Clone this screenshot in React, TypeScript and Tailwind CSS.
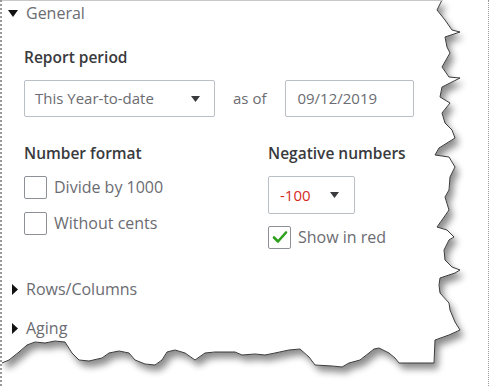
import React from 'react';

const rightEdge: [number, number][] = [
    [440, 0], [435, 10], [443, 20], [450, 30], [458, 32], [443, 37], [445, 47], [448, 53], [440, 67],
    [447, 77], [458, 78], [440, 87], [438, 97], [448, 103], [440, 113], [443, 123], [450, 130],
    [453, 138], [437, 148], [433, 155], [447, 157], [453, 167], [448, 177], [447, 190], [443, 197],
    [447, 210], [440, 220], [435, 227], [445, 230], [452, 237], [447, 240], [442, 250], [443, 260],
    [450, 267], [458, 270], [453, 273], [438, 278], [437, 285], [438, 293], [447, 303], [448, 310],
    [453, 322], [458, 330], [447, 335], [433, 340], [432, 363],
];

const bottomEdge: [number, number][] = [
    [397, 363], [393, 358], [387, 353], [377, 348], [372, 349], [367, 353], [358, 360], [347, 363],
    [340, 367], [330, 366], [313, 365], [307, 357], [298, 349], [287, 350], [273, 353], [263, 355],
    [253, 354], [240, 355], [233, 352], [213, 352], [203, 353], [193, 360], [183, 353], [173, 350],
    [165, 352], [160, 360], [153, 365], [143, 364], [133, 360], [127, 353], [117, 351], [107, 353],
    [100, 358], [87, 361], [77, 360], [70, 353], [63, 342], [53, 341], [43, 343], [33, 342],
    [25, 345], [17, 352], [7, 360], [0, 363],
];

const toPts = (pts: [number, number][]) => pts.map(([x, y]) => `${x},${y}`).join(' ');

function TornEdge() {
    const edge = [...rightEdge, ...bottomEdge];
    return (
        <svg className="absolute inset-0" width="487" height="386">
            <defs>
                <filter id="tear" x="-10%" y="-10%" width="130%" height="130%">
                    <feGaussianBlur in="SourceAlpha" stdDeviation="3.5"/>
                    <feOffset dx="4" dy="6"/>
                    <feComponentTransfer>
                        <feFuncA type="linear" slope="0.45"/>
                    </feComponentTransfer>
                    <feMerge>
                        <feMergeNode/>
                        <feMergeNode in="SourceGraphic"/>
                    </feMerge>
                </filter>
            </defs>
            <polygon points={`0,0 ${toPts(edge)}`} fill="#fff" filter="url(#tear)"/>
            <polyline points={toPts(edge)} fill="none" stroke="#3a3a3a" strokeWidth="1"/>
            <line x1="0" y1="0.5" x2="440" y2="0.5" stroke="#c8c8c8" strokeWidth="1"/>
        </svg>
    );
}

function Caret() {
    return (
        <svg width="9" height="6" viewBox="0 0 9 6">
            <path d="M0 0 H9 L4.5 6 Z" fill="#393a3d"/>
        </svg>
    );
}

function Checkbox({checked, label}: { checked?: boolean; label: string }) {
    return (
        <div className="flex items-center gap-[7px]">
            <div className="w-[23px] h-[23px] border border-[#8d9096] rounded-[2px] bg-white flex items-center justify-center">
                {checked && (
                    <svg width="16" height="14" viewBox="0 0 16 14">
                        <path d="M2 7.5 L6 11.5 L14 2.5" fill="none" stroke="#2ca01c" strokeWidth="2.6"
                              strokeLinecap="round" strokeLinejoin="round"/>
                    </svg>
                )}
            </div>
            <span className="text-[16px] text-[#6b6c72]">{label}</span>
        </div>
    );
}

function Section({open, title}: { open?: boolean; title: string }) {
    return (
        <div className="flex items-center h-[22px]">
            <div className="w-[24px] flex justify-end pr-[8px]">
                {open ? (
                    <svg width="10" height="7" viewBox="0 0 10 7">
                        <path d="M0 0 H10 L5 7 Z" fill="#111"/>
                    </svg>
                ) : (
                    <svg width="6" height="11" viewBox="0 0 6 11">
                        <path d="M0 0 L6 5.5 L0 11 Z" fill="#111"/>
                    </svg>
                )}
            </div>
            <span className="text-[16px] text-[#6b6c72]">{title}</span>
        </div>
    );
}

export default function App() {
    return (
        <div className="relative w-[489px] h-[386px] bg-white overflow-hidden border-l-2 border-r border-dotted border-[#999]"
             style={{fontFamily: '"Open Sans", sans-serif'}}>
            <TornEdge/>
            <div className="relative pt-[2px]">
                <Section open title="General"/>

                <div className="pl-[22px]">
                    <h2 className="mt-[22px] text-[15.5px] font-semibold text-[#393a3d] leading-[22px]">Report period</h2>
                    <div className="mt-[12px] flex items-center">
                        <div className="w-[191px] h-[37px] border border-[#babec5] rounded-[2px] flex items-center justify-between pl-[10px] pr-[14px]">
                            <span className="text-[15px] text-[#6b6c72]">This Year-to-date</span>
                            <Caret/>
                        </div>
                        <span className="ml-[18px] text-[15px] text-[#6b6c72]">as of</span>
                        <div className="ml-[19px] w-[129px] h-[37px] border border-[#babec5] rounded-[2px] flex items-center pl-[11px]">
                            <span className="text-[15px] text-[#6b6c72]">09/12/2019</span>
                        </div>
                    </div>

                    <div className="mt-[25px] flex">
                        <div className="w-[244px]">
                            <h2 className="text-[15.5px] font-semibold text-[#393a3d] leading-[22px]">Number format</h2>
                            <div className="mt-[11px] flex flex-col gap-[12px]">
                                <Checkbox label="Divide by 1000"/>
                                <Checkbox label="Without cents"/>
                            </div>
                        </div>
                        <div>
                            <h2 className="text-[15.5px] font-semibold text-[#393a3d] leading-[22px]">Negative numbers</h2>
                            <div className="mt-[12px] w-[87px] h-[38px] border border-[#babec5] rounded-[2px] flex items-center justify-between pl-[11px] pr-[15px]">
                                <span className="text-[15px] text-[#d52b1e]">-100</span>
                                <Caret/>
                            </div>
                            <div className="mt-[11px]">
                                <Checkbox checked label="Show in red"/>
                            </div>
                        </div>
                    </div>
                </div>

                <div className="mt-[29px]">
                    <Section title="Rows/Columns"/>
                </div>
                <div className="mt-[17px]">
                    <Section title="Aging"/>
                </div>
            </div>
        </div>
    );
}
